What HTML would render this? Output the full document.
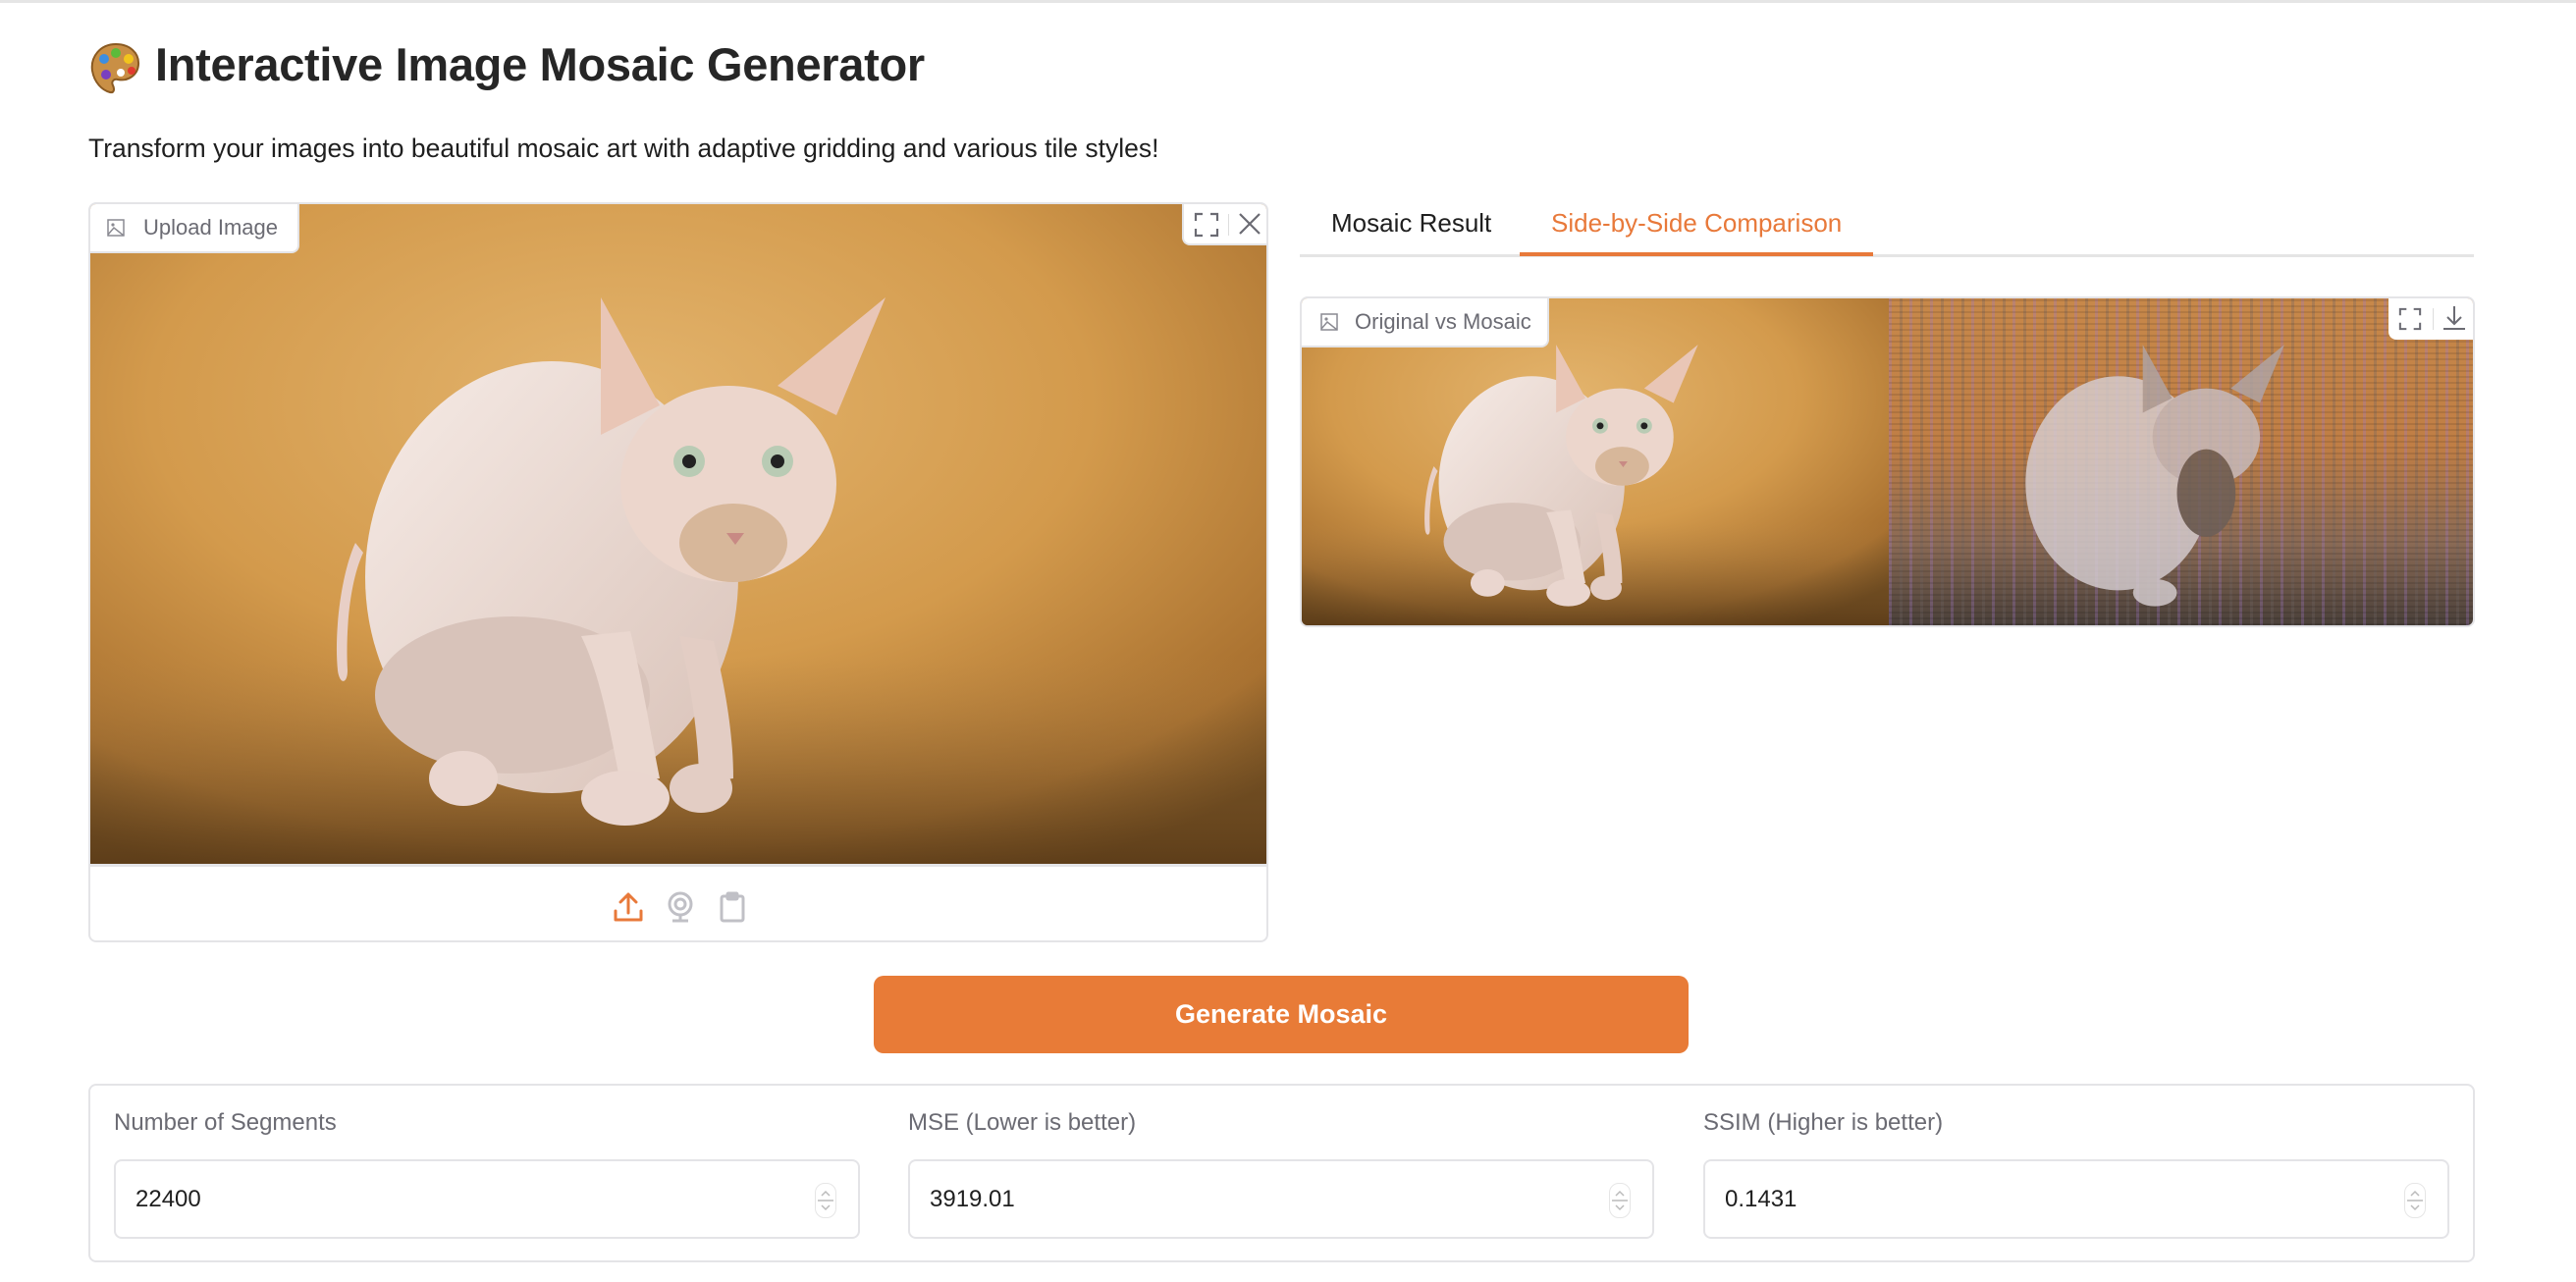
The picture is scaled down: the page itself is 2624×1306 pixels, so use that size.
<!DOCTYPE html>
<html><head><meta charset="utf-8"><style>
*{box-sizing:border-box;margin:0;padding:0}
body{width:2624px;height:1306px;background:#fff;font-family:"Liberation Sans",sans-serif;position:relative;overflow:hidden;color:#1f1f1f}
.abs{position:absolute}
.topline{left:0;top:0;width:2624px;height:3px;background:#e5e5e5}
h1{position:absolute;left:90px;top:38px;font-size:47px;font-weight:bold;color:#262626;letter-spacing:-0.3px}
.sub{left:90px;top:136px;font-size:26.5px;color:#1f1f1f}
.box{border:2px solid #e4e4e7;border-radius:8px;background:#fff}
.label{background:#fff;border:2px solid #e4e4e7;border-top:none;border-left:none;border-radius:0 0 8px 0;display:flex;align-items:center;color:#6b6b73;font-size:22px}
.tab{font-size:26px;top:212px}
.inp{border:2px solid #e4e4e7;border-radius:8px;height:81px;top:1181px;width:760px;font-size:24px;padding-left:20px;display:flex;align-items:center;color:#1f1f1f}
.lab{top:1130px;font-size:24px;color:#6b6b73}
.spin{position:absolute;right:22px;top:22px;width:22px;height:36px;border:1px solid #e6e6e6;border-radius:10px}
</style></head><body>
<div class="abs topline"></div>
<svg class="abs" style="left:88px;top:40px" width="58" height="58" viewBox="0 0 58 58">
<path d="M30 5C14 5 4 18 6 32c2 12 10 20 18 22 4 1 5-3 3-7-2-4 1-7 5-6 10 2 20-4 21-15C54 14 44 5 30 5z" fill="#c98f45" stroke="#8a5a22" stroke-width="2"/>
<circle cx="18" cy="20" r="5" fill="#3d8ee0"/><circle cx="30" cy="14" r="5" fill="#5cbb3a"/><circle cx="43" cy="20" r="5" fill="#f2c51c"/><circle cx="20" cy="36" r="5" fill="#7a3fc0"/><circle cx="46" cy="32" r="4" fill="#e23b2e"/><circle cx="35" cy="34" r="4" fill="#fff"/>
</svg>
<h1 style="left:158px">Interactive Image Mosaic Generator</h1>
<div class="abs sub">Transform your images into beautiful mosaic art with adaptive gridding and various tile styles!</div>

<svg width="0" height="0" style="position:absolute">
<defs>
<radialGradient id="bg1" cx="0.45" cy="0.3" r="0.8"><stop offset="0" stop-color="#e3b46d"/><stop offset="0.5" stop-color="#d39a4c"/><stop offset="0.85" stop-color="#a8702f"/><stop offset="1" stop-color="#5a3a14"/></radialGradient>
<linearGradient id="fl" x1="0" y1="0" x2="0" y2="1"><stop offset="0" stop-color="#b8894a" stop-opacity="0"/><stop offset="1" stop-color="#5e3e1a" stop-opacity="0.85"/></linearGradient>
<linearGradient id="sk" x1="0" y1="0" x2="1" y2="1"><stop offset="0" stop-color="#f6ebe6"/><stop offset="1" stop-color="#d9c2b8"/></linearGradient>
<g id="cat">
<path d="M270 345c-14 30-22 90-18 130 2 15 10 14 10 0-2-40 2-90 16-120z" fill="#e8cfc6"/>
<ellipse cx="470" cy="380" rx="190" ry="220" fill="url(#sk)"/>
<ellipse cx="430" cy="500" rx="140" ry="80" fill="#d8c3ba"/>
<path d="M520 95l60 110-60 30z" fill="#e9c6b6"/><path d="M810 95l-50 120-60-30z" fill="#e9c6b6"/>
<ellipse cx="650" cy="285" rx="110" ry="100" fill="#ecd6cc"/>
<ellipse cx="655" cy="345" rx="55" ry="40" fill="#d7b79a"/>
<circle cx="610" cy="262" r="16" fill="#b9cbb4"/><circle cx="700" cy="262" r="16" fill="#b9cbb4"/>
<circle cx="610" cy="262" r="7" fill="#222"/><circle cx="700" cy="262" r="7" fill="#222"/>
<path d="M648 335l18 0-9 12z" fill="#c88a84"/>
<path d="M500 440c20 40 30 100 40 150l40-5c-10-50-20-110-30-150z" fill="#ead7cf"/>
<path d="M600 440c10 40 20 100 20 150l35-5c0-50-10-100-20-140z" fill="#e3cdc4"/>
<ellipse cx="380" cy="585" rx="35" ry="28" fill="#ead6cf"/>
<ellipse cx="545" cy="605" rx="45" ry="28" fill="#ead6cf"/><ellipse cx="622" cy="595" rx="32" ry="25" fill="#e3cdc4"/>
</g>
</defs>
</svg>

<!-- upload box -->
<div class="abs box" style="left:90px;top:206px;width:1202px;height:754px;overflow:hidden">
<svg class="abs" style="left:0;top:0" width="1200" height="672" viewBox="0 0 1200 672">
<rect width="1200" height="672" fill="url(#bg1)"/>
<rect y="460" width="1200" height="212" fill="url(#fl)"/>
<use href="#cat"/>
</svg>
<div class="abs" style="left:0;top:672px;width:1200px;height:3px;background:#e4e4e7"></div>
<div class="abs label" style="left:0;top:0;width:213px;height:50px;padding-left:16px">
<svg width="20" height="20" viewBox="0 0 20 20" style="margin-right:18px"><rect x="2" y="2" width="16" height="16" fill="none" stroke="#8a8a92" stroke-width="1.5"/><circle cx="7" cy="7" r="1.6" fill="#8a8a92"/><path d="M2 17l6-7 10 8" fill="none" stroke="#8a8a92" stroke-width="1.5"/></svg>Upload Image</div>
<div class="abs" style="right:0;top:0;width:86px;height:42px;background:#fff;border-radius:0 0 0 8px;border:2px solid #e4e4e7;border-top:none;border-right:none">
<svg class="abs" style="left:10px;top:8px" width="26" height="26" viewBox="0 0 26 26" fill="none" stroke="#6b6b73" stroke-width="2.2"><path d="M2 9V2h7M17 2h7v7M24 17v7h-7M9 24H2v-7"/></svg>
<div class="abs" style="left:45px;top:10px;width:1px;height:22px;background:#ddd"></div>
<svg class="abs" style="left:55px;top:8px" width="24" height="24" viewBox="0 0 24 24" fill="none" stroke="#6b6b73" stroke-width="2.2"><path d="M2 2l20 20M22 2L2 22"/></svg>
</div>
<svg class="abs" style="left:532px;top:700px" width="32" height="32" viewBox="0 0 32 32" fill="none" stroke="#e8793a" stroke-width="3" stroke-linecap="round" stroke-linejoin="round"><path d="M16 22V4M8 11l8-8 8 8M3 20v9h26v-9"/></svg>
<svg class="abs" style="left:586px;top:700px" width="30" height="32" viewBox="0 0 30 32" fill="none" stroke="#c0c0c6" stroke-width="3"><circle cx="15" cy="13" r="11"/><circle cx="15" cy="13" r="5"/><path d="M7 30h16M15 24v6" /></svg>
<svg class="abs" style="left:641px;top:700px" width="26" height="32" viewBox="0 0 26 32" fill="none" stroke="#c0c0c6" stroke-width="3"><rect x="2" y="5" width="22" height="25" rx="2"/><rect x="8" y="2" width="10" height="6" rx="1"/></svg>
</div>

<!-- tabs -->
<div class="abs tab" style="left:1356px;color:#1f1f1f">Mosaic Result</div>
<div class="abs tab" style="left:1580px;color:#e8793a">Side-by-Side Comparison</div>
<div class="abs" style="left:1324px;top:259px;width:1196px;height:3px;background:#e5e5e5"></div>
<div class="abs" style="left:1548px;top:257px;width:360px;height:4px;background:#e8793a"></div>

<!-- comparison -->
<div class="abs box" style="left:1324px;top:302px;width:1197px;height:337px;overflow:hidden">
<svg class="abs" style="left:0;top:0" width="598" height="333" viewBox="0 0 1200 672" preserveAspectRatio="none">
<rect width="1200" height="672" fill="url(#bg1)"/><rect y="460" width="1200" height="212" fill="url(#fl)"/><use href="#cat"/>
</svg>
<div class="abs" style="left:598px;top:0;width:597px;height:333px;background:
repeating-linear-gradient(0deg,rgba(0,0,0,.1) 0 2px,transparent 2px 6px),
repeating-linear-gradient(90deg,rgba(160,120,200,.3) 0 3px,transparent 3px 11px,rgba(110,100,100,.3) 11px 14px,transparent 14px 21px),
linear-gradient(180deg,#c7884a 0%,#c07e45 45%,#8a6a55 75%,#4a403a 100%)"></div>
<svg class="abs" style="left:598px;top:0" width="597" height="333" viewBox="0 0 1200 672" preserveAspectRatio="none" opacity="0.8">
<ellipse cx="470" cy="380" rx="190" ry="220" fill="#d8d0d4"/><ellipse cx="650" cy="285" rx="110" ry="100" fill="#c8bec2"/>
<path d="M520 95l60 110-60 30zM810 95l-50 120-60-30z" fill="#b0a6a8"/>
<ellipse cx="650" cy="400" rx="60" ry="90" fill="#6a5e58"/>
<ellipse cx="545" cy="605" rx="45" ry="28" fill="#d9d1d4"/>
</svg>
<div class="abs label" style="left:0;top:0;width:252px;height:50px;padding-left:18px">
<svg width="20" height="20" viewBox="0 0 20 20" style="margin-right:16px"><rect x="2" y="2" width="16" height="16" fill="none" stroke="#8a8a92" stroke-width="1.5"/><circle cx="7" cy="7" r="1.6" fill="#8a8a92"/><path d="M2 17l6-7 10 8" fill="none" stroke="#8a8a92" stroke-width="1.5"/></svg>Original vs Mosaic</div>
<div class="abs" style="right:0;top:0;width:86px;height:42px;background:#fff;border-radius:0 0 0 8px">
<svg class="abs" style="left:10px;top:9px" width="24" height="24" viewBox="0 0 26 26" fill="none" stroke="#6b6b73" stroke-width="2.2"><path d="M2 9V2h7M17 2h7v7M24 17v7h-7M9 24H2v-7"/></svg>
<div class="abs" style="left:45px;top:10px;width:1px;height:22px;background:#ddd"></div>
<svg class="abs" style="left:54px;top:6px" width="26" height="28" viewBox="0 0 26 28" fill="none" stroke="#6b6b73" stroke-width="2"><path d="M13 2v18M6 13l7 7 7-7M2 25h22"/></svg>
</div>
</div>

<!-- button -->
<div class="abs" style="left:890px;top:994px;width:830px;height:79px;background:#e87b37;border-radius:10px;color:#fff;font-weight:bold;font-size:27px;display:flex;align-items:center;justify-content:center">Generate Mosaic</div>

<!-- bottom panel -->
<div class="abs box" style="left:90px;top:1104px;width:2431px;height:182px"></div>
<div class="abs lab" style="left:116px">Number of Segments</div>
<div class="abs lab" style="left:925px">MSE (Lower is better)</div>
<div class="abs lab" style="left:1735px">SSIM (Higher is better)</div>
<div class="abs inp" style="left:116px">22400<div class="spin"><svg width="20" height="34" viewBox="0 0 20 34" fill="none" stroke="#bbb" stroke-width="1.5"><path d="M6 12l4-4 4 4M6 22l4 4 4-4M2 17h16"/></svg></div></div>
<div class="abs inp" style="left:925px">3919.01<div class="spin"><svg width="20" height="34" viewBox="0 0 20 34" fill="none" stroke="#bbb" stroke-width="1.5"><path d="M6 12l4-4 4 4M6 22l4 4 4-4M2 17h16"/></svg></div></div>
<div class="abs inp" style="left:1735px">0.1431<div class="spin"><svg width="20" height="34" viewBox="0 0 20 34" fill="none" stroke="#bbb" stroke-width="1.5"><path d="M6 12l4-4 4 4M6 22l4 4 4-4M2 17h16"/></svg></div></div>
</body></html>
